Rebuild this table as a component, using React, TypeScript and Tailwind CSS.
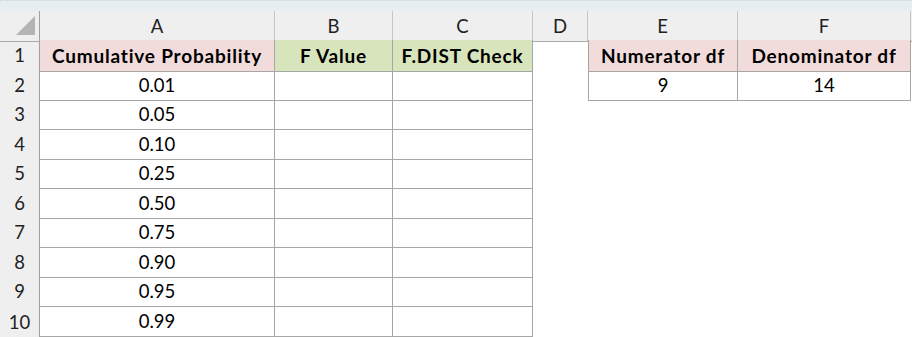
import React from 'react';

const COLS = ['A', 'B', 'C', 'D', 'E', 'F'];

const VALUES = ['0.01', '0.05', '0.10', '0.25', '0.50', '0.75', '0.90', '0.95', '0.99'];

const GRID = 'grid grid-cols-[40px_235px_118px_140px_55px_150px_173px_1fr]';

const cellBase = 'flex items-center justify-center pt-[2px] whitespace-nowrap';

export default function App() {
  const rows = Array.from({ length: 10 }, (_, i) => i + 1);

  const dataCell = (row: number, col: number) => {
    const last = row === 10;
    let text = '';
    let cls = cellBase;

    if (col <= 2) {
      cls += last
        ? ' border-r border-b-2 border-[#a6a6a6]'
        : ' border-r border-b border-[#a6a6a6]';
    } else if (col === 4 && row <= 2) {
      cls += ' border-l border-r border-b border-[#a6a6a6]';
    } else if (col === 5 && row <= 2) {
      cls += ' border-r border-b border-[#a6a6a6]';
    }

    if (row === 1) {
      cls += ' font-bold text-[19px] tracking-[0.8px]';
      if (col === 0) { text = 'Cumulative Probability'; cls += ' bg-[#f2dcdb]'; }
      if (col === 1) { text = 'F Value'; cls += ' bg-[#d8e4bc]'; }
      if (col === 2) { text = 'F.DIST Check'; cls += ' bg-[#d8e4bc]'; }
      if (col === 4) { text = 'Numerator df'; cls += ' bg-[#f2dcdb]'; }
      if (col === 5) { text = 'Denominator df'; cls += ' bg-[#f2dcdb]'; }
    } else {
      if (col === 0) text = VALUES[row - 2];
      if (row === 2 && col === 4) text = '9';
      if (row === 2 && col === 5) text = '14';
    }

    return (
      <div key={col} className={cls}>
        {text}
      </div>
    );
  };

  return (
    <div className="w-[912px] h-[337px] bg-white overflow-hidden font-['Lato',sans-serif] text-[18.5px] text-black">
      {/* formula bar edge */}
      <div className="h-[11px] bg-[#e6eef1] border-t border-dotted border-[#d2d6d8]" />

      {/* column headers */}
      <div className={`${GRID} h-[29px]`}>
        <div className="relative bg-[#efefef] border-r border-b border-r-[#a0a0a0] border-b-[#a9a9a9]">
          <svg className="absolute left-[16px] top-[5px]" width="19" height="19" viewBox="0 0 19 19">
            <polygon points="19,0 19,19 0,19" fill="#b4b4b4" />
          </svg>
        </div>
        {COLS.map((c) => (
          <div
            key={c}
            className={`${cellBase} bg-[#efefef] text-[#222] border-r border-b border-r-[#c6c6c6] border-b-[#a9a9a9]`}
          >
            {c}
          </div>
        ))}
        <div className="bg-[#efefef] border-b border-[#a9a9a9]" />
      </div>

      {/* sheet rows */}
      {rows.map((r) => (
        <div key={r} className={`${GRID} ${r % 2 === 1 ? 'h-[30px]' : 'h-[29px]'}`}>
          <div className={`${cellBase} bg-[#efefef] text-[#222] border-r border-b border-r-[#a0a0a0] border-b-[#d6d6d6]`}>
            {r}
          </div>
          {COLS.map((_, ci) => dataCell(r, ci))}
          <div />
        </div>
      ))}
      <div className="w-[40px] h-[4px] bg-[#efefef] border-r border-[#a0a0a0]" />
    </div>
  );
}
